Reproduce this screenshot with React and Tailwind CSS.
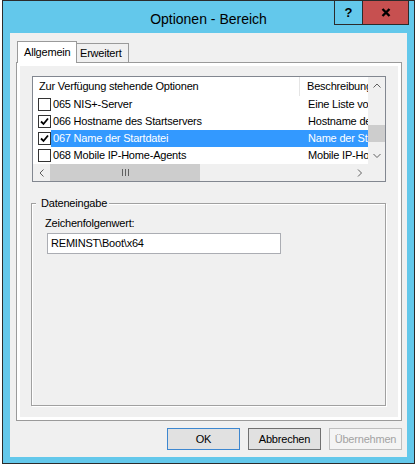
import React from 'react';

const options = [
  { id: '065', name: '065 NIS+-Server', desc: 'Eine Liste von NIS+-Servern', checked: false },
  { id: '066', name: '066 Hostname des Startservers', desc: 'Hostname des Startservers', checked: true },
  { id: '067', name: '067 Name der Startdatei', desc: 'Name der Startdatei', checked: true, selected: true },
  { id: '068', name: '068 Mobile IP-Home-Agents', desc: 'Mobile IP-Home-Agents', checked: false },
];

const font = "font-['Liberation_Sans',Arial,sans-serif]";

const Chevron = ({ dir }) => {
  const pts = {
    up: '0.5,4.5 4,1 7.5,4.5',
    down: '0.5,1 4,4.5 7.5,1',
    left: '4.5,0.5 1,4 4.5,7.5',
    right: '1,0.5 4.5,4 1,7.5',
  }[dir];
  const vertical = dir === 'up' || dir === 'down';
  return (
    <svg width={vertical ? 8 : 6} height={vertical ? 6 : 8} viewBox={vertical ? '0 0 8 6' : '0 0 6 8'}>
      <polyline points={pts} fill="none" stroke="#606060" strokeWidth="1" />
    </svg>
  );
};

const CheckBox = ({ checked }) => (
  <div className="w-[13px] h-[13px] border border-[#333333] bg-white flex items-center justify-center shrink-0">
    {checked && (
      <svg width="11" height="11" viewBox="0 0 11 11">
        <polyline points="2,5.5 4.5,8 9,2.5" fill="none" stroke="#000" strokeWidth="1.8" />
      </svg>
    )}
  </div>
);

const OptionsList = () => (
  <div className="mt-[10px] ml-[12px] w-[354px] h-[106px] border border-[#828790] bg-white flex flex-col">
    <div className="flex h-[87px]">
      {/* Spalten */}
      <div className="w-[335px] flex flex-col overflow-hidden">
        <div className="h-[19px] flex bg-white">
          <div className="w-[267px] pl-[6px] flex items-center border-r border-[#e5e5e5] whitespace-nowrap">
            Zur Verfügung stehende Optionen
          </div>
          <div className="flex-1 pl-[7px] flex items-center whitespace-nowrap overflow-hidden">Beschreibung</div>
        </div>
        {options.map((o) => (
          <div key={o.id} className="h-[17px] flex items-center">
            <div className="ml-[5px] w-[13px]">
              <CheckBox checked={o.checked} />
            </div>
            <div
              className={`flex-1 h-full flex items-center ${o.selected ? 'bg-[#3399ff] text-white' : ''}`}
            >
              <div className="w-[249px] pl-[2px] whitespace-nowrap overflow-hidden">{o.name}</div>
              <div className="flex-1 pl-[8px] whitespace-nowrap overflow-hidden">{o.desc}</div>
            </div>
          </div>
        ))}
      </div>
      {/* vertikale Bildlaufleiste */}
      <div className="w-[17px] bg-[#f0f0f0] flex flex-col">
        <div className="h-[17px] flex items-center justify-center">
          <Chevron dir="up" />
        </div>
        <div className="h-[31px]" />
        <div className="h-[17px] bg-[#cdcdcd]" />
        <div className="h-[5px]" />
        <div className="h-[17px] flex items-center justify-center">
          <Chevron dir="down" />
        </div>
      </div>
    </div>
    {/* horizontale Bildlaufleiste */}
    <div className="flex h-[17px] bg-[#f0f0f0]">
      <div className="w-[17px] flex items-center justify-center">
        <Chevron dir="left" />
      </div>
      <div className="w-[150px] bg-[#cdcdcd] flex items-center justify-center gap-[2px]">
        <div className="w-px h-[7px] bg-[#606060]" />
        <div className="w-px h-[7px] bg-[#606060]" />
        <div className="w-px h-[7px] bg-[#606060]" />
      </div>
      <div className="w-[151px]" />
      <div className="w-[17px] flex items-center justify-center">
        <Chevron dir="right" />
      </div>
      <div className="w-[17px]" />
    </div>
  </div>
);

const DialogButton = ({ children, variant }) => {
  const styles = {
    default: 'border-[#3d87d0] bg-[#e1e1e1] text-black',
    normal: 'border-[#707070] bg-[#e1e1e1] text-black',
    disabled: 'border-[#bfbfbf] bg-[#f4f4f4] text-[#a3a3a3]',
  }[variant];
  return (
    <button className={`w-[73px] h-[22px] border flex items-center justify-center ${styles}`}>
      {children}
    </button>
  );
};

export default function App() {
  return (
    <div className={`w-[416px] h-[465px] bg-white text-[11px] tracking-[-0.2px] text-black ${font}`}>
      <div className="ml-[2px] w-[413px] h-[464px] border border-[#2b2b2b] bg-[#63c8eb] relative flex flex-col">
        {/* Titelleiste */}
        <div className="h-[32px] pt-[10px] flex justify-center text-[14px] leading-[16px] tracking-normal">
          Optionen - Bereich
        </div>
        <div className="absolute top-[-1px] right-[5px] flex h-[25px]">
          <div className="w-[29px] border border-[#2b2b2b] flex items-center justify-center font-bold text-[13px] tracking-normal">
            ?
          </div>
          <div className="w-[46px] border-y border-r border-[#2b2b2b] bg-[#c75050] flex items-center justify-center">
            <svg width="10" height="9" viewBox="0 0 10 9">
              <path d="M1.5 1 L8.5 8 M8.5 1 L1.5 8" stroke="#000" strokeWidth="2.4" />
            </svg>
          </div>
        </div>

        {/* Clientbereich */}
        <div className="ml-[7px] w-[397px] h-[424px] bg-[#f0f0f0] flex flex-col">
          {/* Registerkarten */}
          <div className="mt-[8px] ml-[7px] flex items-end h-[21px] relative z-10">
            <div className="h-[22px] -mb-px w-[60px] bg-white border-x border-t border-[#9a9a9a] pl-[6px] pt-[4px] leading-[13px]">
              Allgemein
            </div>
            <div className="h-[19px] w-[52px] bg-[#f0f0f0] border-r border-t border-[#9a9a9a] pl-[3px] pt-[3px] leading-[13px]">
              Erweitert
            </div>
          </div>
          <div className="ml-[6px] w-[386px] h-[359px] border border-[#9a9a9a] bg-white p-[3px] flex">
            <div className="flex-1 bg-[#f0f0f0] flex flex-col">
              <OptionsList />
              <fieldset className="mt-[15px] ml-[11px] w-[355px] h-[209px] border border-[#a0a0a0] shadow-[inset_1px_1px_0_#fff,1px_1px_0_#fff]">
                <legend className="ml-[4px] pl-[5px] pr-[2px] leading-[13px] bg-[#f0f0f0]">Dateneingabe</legend>
                <div className="mt-[7px] pl-[13px] leading-[13px]">Zeichenfolgenwert:</div>
                <div className="mt-[3px] ml-[15px] w-[234px] h-[21px] border border-[#abadb3] bg-white pl-[3px] flex items-center">
                  REMINST\Boot\x64
                </div>
              </fieldset>
            </div>
          </div>

          {/* Schaltflächen */}
          <div className="mt-[7px] pr-[5px] flex justify-end gap-[8px]">
            <DialogButton variant="default">OK</DialogButton>
            <DialogButton variant="normal">Abbrechen</DialogButton>
            <DialogButton variant="disabled">Übernehmen</DialogButton>
          </div>
        </div>
      </div>
    </div>
  );
}
